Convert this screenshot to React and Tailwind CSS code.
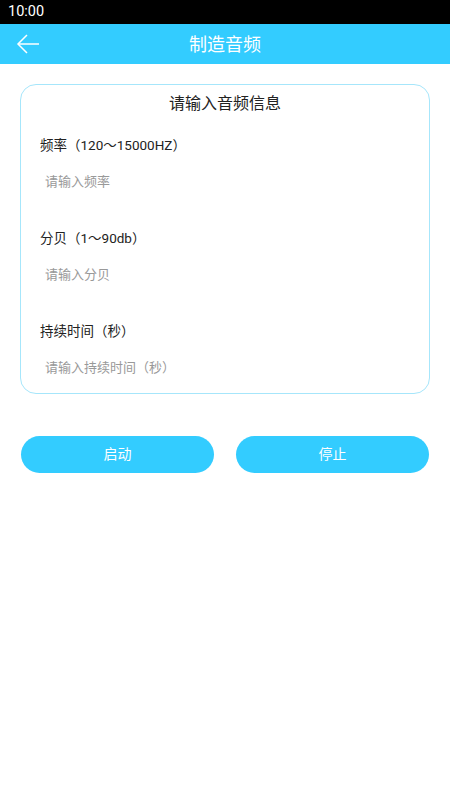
import React, { useState } from 'react';

const fields = [
  { label: '频率（120～15000HZ）', placeholder: '请输入频率' },
  { label: '分贝（1～90db）', placeholder: '请输入分贝' },
  { label: '持续时间（秒）', placeholder: '请输入持续时间（秒）' },
];

const App = () => {
  const [values, setValues] = useState(['', '', '']);

  return (
    <div
      className="min-h-screen w-[450px] bg-white"
      style={{ fontFamily: '"Roboto", "Noto Sans CJK SC", sans-serif' }}
    >
      {/* status bar */}
      <div className="h-6 bg-black flex items-center px-2">
        <span className="text-white text-[14.5px] leading-none">10:00</span>
      </div>

      {/* header */}
      <div className="h-10 bg-[#33ccff] flex items-center relative">
        <button className="absolute left-[12px] top-0 h-10 w-8 flex items-center justify-center">
          <svg width="24" height="20" viewBox="0 0 24 20" fill="none" stroke="white" strokeWidth="1.5">
            <path d="M23 10H2" />
            <path d="M11 1L2 10l9 9" />
          </svg>
        </button>
        <h1 className="w-full text-center text-white text-[18px]">制造音频</h1>
      </div>

      <main className="px-5 pt-5">
        <div className="border border-[#a6e6fb] rounded-[16px] px-[19px] pt-[7px]">
          <h2 className="text-center text-[16px] leading-6 text-[#222]">请输入音频信息</h2>
          <div className="mt-[19px]">
            {fields.map((f, i) => (
              <div key={i} className={i < fields.length - 1 ? 'mb-[21px]' : ''}>
                <div className="text-[13.5px] leading-5 text-[#222]">{f.label}</div>
                <input
                  className="w-full h-[52px] pl-[5px] text-[13px] text-[#333] placeholder:text-[#999] outline-none bg-transparent"
                  placeholder={f.placeholder}
                  value={values[i]}
                  onChange={(e) => {
                    const next = [...values];
                    next[i] = e.target.value;
                    setValues(next);
                  }}
                />
              </div>
            ))}
          </div>
        </div>

        <div className="flex gap-[22px] mt-[42px] px-[1px]">
          <button className="flex-1 h-[37px] rounded-full bg-[#33ccff] text-white text-[14px]">启动</button>
          <button className="flex-1 h-[37px] rounded-full bg-[#33ccff] text-white text-[14px]">停止</button>
        </div>
      </main>
    </div>
  );
};

export default App;
